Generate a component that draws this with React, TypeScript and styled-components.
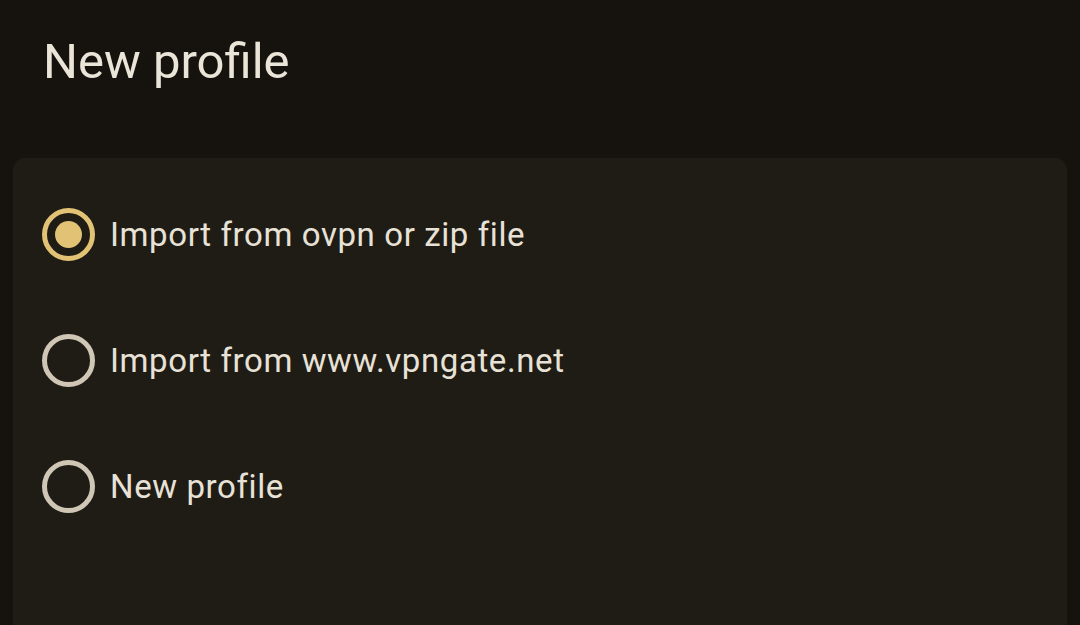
import React from 'react';
import styled, { createGlobalStyle } from 'styled-components';

const GlobalStyle = createGlobalStyle`
    html,
    body {
        margin: 0;
        padding: 0;
        background: #16130e;
        font-family: 'Roboto', 'Noto Sans', sans-serif;
        color: #e8e2d6;
    }
`;

const Page = styled.div`
    width: 1080px;
    height: 625px;
    overflow: hidden;
    display: flex;
    flex-direction: column;
`;

const Title = styled.h1`
    margin: 0;
    padding: 29px 0 0 43px;
    height: 158px;
    box-sizing: border-box;
    font-size: 49px;
    font-weight: 400;
    line-height: 66px;
    color: #ebe4d8;
`;

const Card = styled.div`
    margin: 0 13px;
    flex: 1;
    background: #1f1c16;
    border-radius: 12px 12px 0 0;
    padding: 13px 28px 0 29px;
    display: flex;
    flex-direction: column;
`;

const Option = styled.label`
    height: 126px;
    display: flex;
    align-items: center;
    gap: 15px;
    cursor: pointer;
`;

const Radio = styled.span<{ $checked: boolean }>`
    width: 53px;
    height: 53px;
    box-sizing: border-box;
    border-radius: 50%;
    border: 5px solid ${(p) => (p.$checked ? '#e2c274' : '#d0c6b6')};
    display: flex;
    align-items: center;
    justify-content: center;
    flex-shrink: 0;

    &::after {
        content: '';
        display: ${(p) => (p.$checked ? 'block' : 'none')};
        width: 27px;
        height: 27px;
        border-radius: 50%;
        background: #e2c274;
    }
`;

const OptionText = styled.span`
    font-size: 33px;
    letter-spacing: 0.6px;
    color: #e8e2d6;
`;

const options = ['Import from ovpn or zip file', 'Import from www.vpngate.net', 'New profile'];

export default function App() {
    const [selected, setSelected] = React.useState(0);

    return (
        <Page>
            <GlobalStyle />
            <Title>New profile</Title>
            <Card>
                {options.map((label, i) => (
                    <Option key={label} onClick={() => setSelected(i)}>
                        <Radio $checked={selected === i} />
                        <OptionText>{label}</OptionText>
                    </Option>
                ))}
            </Card>
        </Page>
    );
}
